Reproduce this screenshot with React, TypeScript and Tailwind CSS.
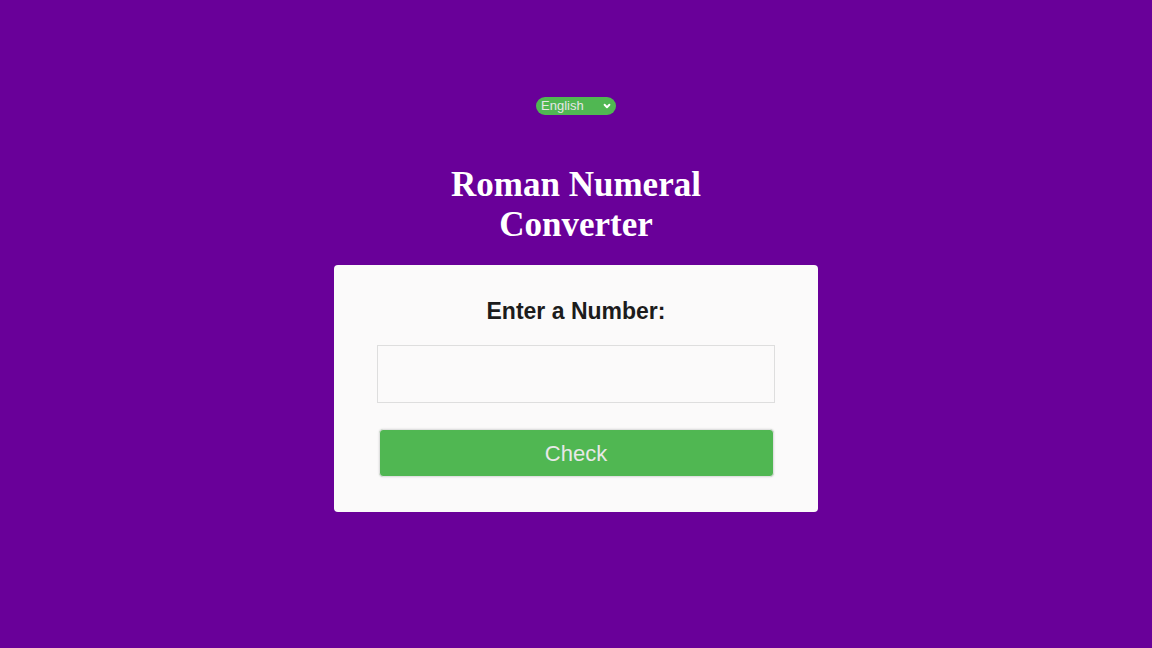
import { useState } from "react";

export default function App() {
  const [lang, setLang] = useState("en");
  const [value, setValue] = useState("");

  return (
    <div className="min-h-screen w-full bg-[#690099] flex flex-col items-center font-['Liberation_Sans',Arial,sans-serif]">
      {/* Language picker */}
      <div className="mt-[97px] relative flex h-[18px]">
        <select
          value={lang}
          onChange={(e) => setLang(e.target.value)}
          className="block appearance-none h-[18px] w-[80px] rounded-full bg-[#50b752] pl-[5px] text-[13px] leading-[18px] text-[#e6e6e6] outline-none"
        >
          <option value="en">English</option>
          <option value="es">Español</option>
        </select>
        <svg
          className="pointer-events-none absolute right-[5px] top-[5px] h-[8px] w-[8px] text-white"
          viewBox="0 0 10 10"
          fill="none"
          stroke="currentColor"
          strokeWidth={2.4}
          strokeLinecap="round"
          strokeLinejoin="round"
        >
          <path d="M2 3.5l3 3 3-3" />
        </svg>
      </div>

      {/* Title */}
      <h1 className="mt-[50px] text-center font-['Liberation_Serif','Times_New_Roman',serif] text-[35px] font-bold leading-[40px] text-white">
        Roman Numeral
        <br />
        Converter
      </h1>

      {/* Card */}
      <div className="mt-[20px] w-[484px] rounded-[4px] bg-[#fbfafa] px-[43px] pt-[33px] pb-[35px] flex flex-col items-center">
        <label className="text-[23px] font-bold leading-[26px] text-[#1c1c1c]">Enter a Number:</label>
        <input
          type="number"
          value={value}
          onChange={(e) => setValue(e.target.value)}
          className="mt-[21px] h-[58px] w-[398px] border border-[#dedede] bg-[#fbfafa] px-3 text-[20px] outline-none"
        />
        <button className="mt-[26px] h-[48px] w-[395px] rounded-[4px] border border-[#e0e0e0] bg-[#50b752] text-[22px] text-[#e8e8e8] shadow-[0_0_2px_rgba(0,0,0,0.15)]">
          Check
        </button>
      </div>
    </div>
  );
}
